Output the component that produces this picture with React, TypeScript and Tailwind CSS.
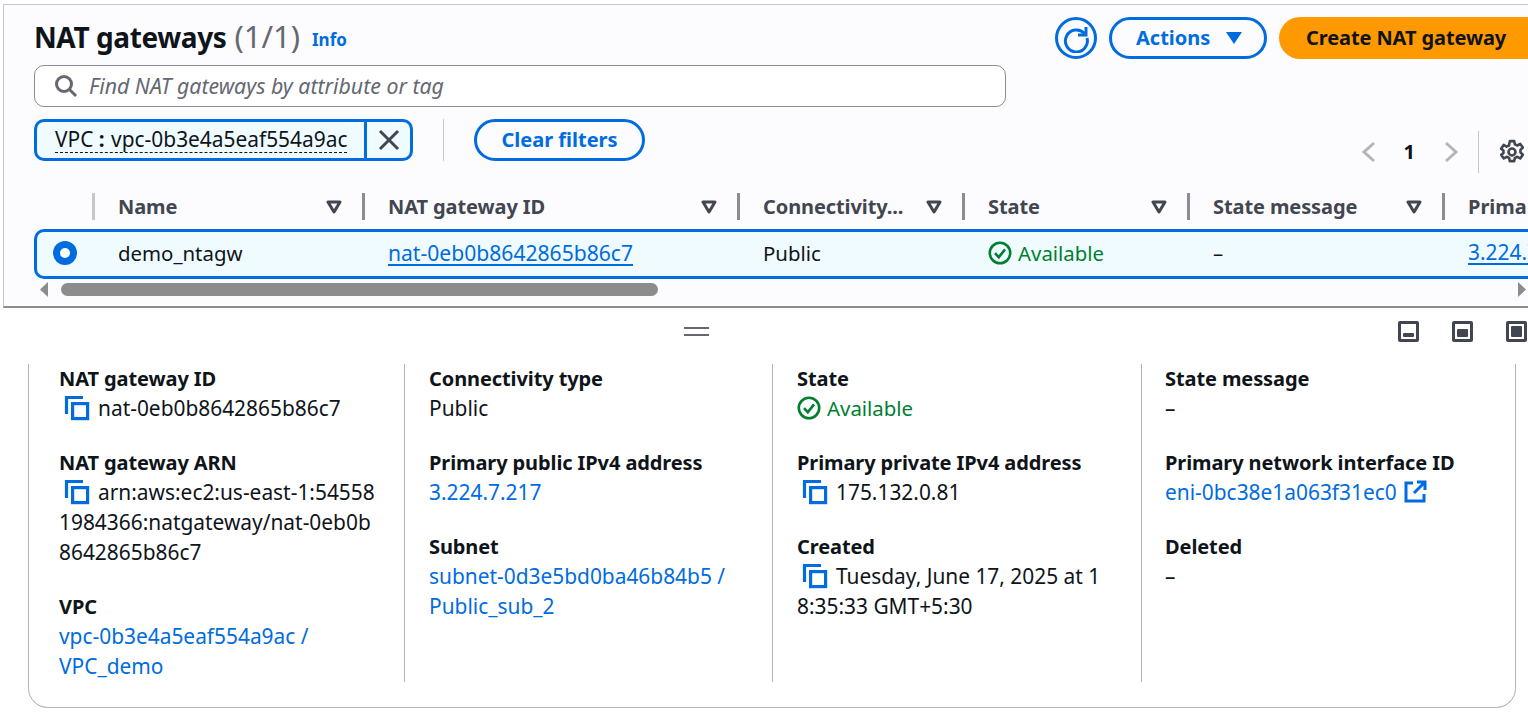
import React from "react";

const Copy = () => (
  <svg width="26" height="26" viewBox="0 0 26 26" fill="none" className="shrink-0" aria-hidden>
    <path d="M2.500 19V2.500H19" stroke="#006ce0" strokeWidth="3.200" />
    <rect x="8.600" y="8.600" width="15" height="15" stroke="#006ce0" strokeWidth="3.200" />
  </svg>
);

const Check = ({ size = 24 }: { size?: number }) => (
  <svg width={size} height={size} viewBox="0 0 24 24" fill="none" className="shrink-0" aria-hidden>
    <circle cx="12" cy="12" r="10.200" stroke="#00802f" strokeWidth="2.600" />
    <path d="M7 12.200l3.800 4L17 8.400" stroke="#00802f" strokeWidth="2.600" />
  </svg>
);

const SortDown = () => (
  <svg width="16" height="14" viewBox="0 0 16 14" fill="none" aria-hidden>
    <path d="M2 2h12L8 12z" stroke="#424650" strokeWidth="3" strokeLinejoin="round" />
  </svg>
);

const Column = ({
  name,
  width,
  strong,
}: {
  name: string;
  width: string;
  strong?: boolean;
}) => (
  <div className={`flex h-[27px] shrink-0 items-center border-l-[3px] pl-[23px] ${width} ${strong ? "border-[#8c8c94]" : "border-[#c6c6cd]"}`}>
    <span className="flex-1 whitespace-nowrap text-[20px] font-bold tracking-[-0.1px] text-[#424650]">{name}</span>
    <span className="mr-[20px] flex">
      <SortDown />
    </span>
  </div>
);

const Label = ({ children }: { children: React.ReactNode }) => (
  <div className="h-[30px] whitespace-nowrap text-[20px] font-bold leading-[30px] tracking-[-0.1px] text-[#0f141a]">{children}</div>
);

const Value = ({ children, blue }: { children: React.ReactNode; blue?: boolean }) => (
  <div className={`-translate-y-px whitespace-nowrap text-[20.9px] leading-[30px] ${blue ? "text-[#006ce0]" : "text-[#0f141a]"}`}>{children}</div>
);

const Field = ({ label, children }: { label: string; children: React.ReactNode }) => (
  <div className="mb-[24px]">
    <Label>{label}</Label>
    {children}
  </div>
);

const CopyLine = ({ children }: { children: React.ReactNode }) => (
  <span className="inline-flex items-center gap-[8px] pl-[5px] align-top">
    <Copy />
    <span>{children}</span>
  </span>
);

const DetailColumn = ({ children, width }: { children: React.ReactNode; width: string }) => (
  <div className={`h-[318px] shrink-0 first:border-l-0 first:pl-[30px] last:pl-[23px] border-l border-[#b4b4bb] pl-[24px] ${width}`}>
    {children}
  </div>
);

const Available = () => (
  <span className="flex -translate-x-px items-center gap-[6px] text-[20.4px] leading-[30px] text-[#00802f]">
    <Check />
    Available
  </span>
);

const SplitIcon = ({ fill }: { fill: string }) => (
  <span className="flex h-[21px] w-[21px] items-end rounded-[2px] border-[3px] border-[#424650] p-[2px]">
    <span className={`block w-full rounded-[1px] bg-[#424650] ${fill}`} />
  </span>
);

export default function App() {
  return (
    <div
      className="flex h-[712px] w-[1528px] flex-col overflow-hidden bg-white pt-[4px] pl-[3px]"
      style={{ fontFamily: '"Noto Sans", sans-serif' }}
    >
      <div className="flex h-[304px] shrink-0 flex-col border-t border-l border-b-2 border-[#c6c6cd] border-b-[#8c8c94] bg-[#fcfcfe]">
        <div className="flex h-[54px] shrink-0 items-end pl-[30px]">
          <div className="mb-[2px] flex h-[41px] flex-1 items-center">
            <h1 className="flex items-center whitespace-nowrap text-[28px] font-bold leading-none tracking-[-0.4px] text-[#0f141a]">
              NAT gateways
              <span className="ml-[8px] text-[31px] font-normal tracking-normal text-[#656871]">(1/1)</span>
            </h1>
            <span className="ml-[12px] mt-[6px] text-[17px] font-bold text-[#006ce0]">Info</span>
          </div>
          <div className="flex items-center">
            <button className="flex h-[42px] w-[42px] items-center justify-center rounded-full border-[3px] border-[#006ce0]">
              <svg width="30" height="30" viewBox="0 0 30 30" fill="none" aria-hidden>
                <path d="M23.500 10.500A11 11 0 1 0 26 15" stroke="#006ce0" strokeWidth="3" />
                <path d="M25 4v8h-8" stroke="#006ce0" strokeWidth="3" />
              </svg>
            </button>
            <button className="ml-[12px] flex h-[42px] w-[158px] items-center gap-[16px] rounded-full border-[3px] border-[#006ce0] pl-[24px] text-[20px] font-bold text-[#006ce0]">
              Actions
              <svg width="16" height="12" viewBox="0 0 16 12" aria-hidden>
                <path d="M0 0h16L8 12z" fill="#006ce0" />
              </svg>
            </button>
            <button className="ml-[12px] flex h-[42px] w-[249px] shrink-0 items-center rounded-l-full bg-[#ff9900] pl-[27px] text-[20px] font-bold tracking-[-0.1px] text-[#0f141a]">
              Create NAT gateway
            </button>
          </div>
        </div>

        <div className="mt-[6px] ml-[30px] flex h-[42px] w-[972px] shrink-0 items-center rounded-[10px] border border-[#8c8c94] bg-white pl-[19px]">
          <svg width="24" height="24" viewBox="0 0 24 24" fill="none" aria-hidden>
            <circle cx="10" cy="10" r="7.500" stroke="#656871" strokeWidth="3" />
            <path d="M15.500 15.500l6.500 6.500" stroke="#656871" strokeWidth="3" />
          </svg>
          <span className="ml-[11px] text-[21.3px] italic text-[#656871]">Find NAT gateways by attribute or tag</span>
        </div>

        <div className="mt-[12px] flex h-[53px] shrink-0 pl-[30px]">
          <div className="flex h-[42px] w-[379px] rounded-[10px] border-[3px] border-[#006ce0] bg-[#f0fbff]">
            <span className="flex flex-1 items-center pl-[18px]">
              <span className="border-b border-dashed border-[#0f141a] text-[20.9px] leading-[25px] whitespace-nowrap text-[#0f141a]">
                VPC <b className="mr-[1px]">:</b> vpc-0b3e4a5eaf554a9ac
              </span>
            </span>
            <span className="flex w-[46px] items-center justify-center border-l-[3px] border-[#006ce0]">
              <svg width="22" height="22" viewBox="0 0 22 22" fill="none" aria-hidden>
                <path d="M2 2l18 18M20 2L2 20" stroke="#424650" strokeWidth="3" />
              </svg>
            </span>
          </div>
          <div className="ml-[30px] h-[42px] w-px bg-[#c6c6cd]" />
          <button className="ml-[30px] flex h-[42px] w-[171px] items-center justify-center rounded-full border-[3px] border-[#006ce0] text-[20px] font-bold text-[#006ce0]">
            Clear filters
          </button>
          <div className="ml-auto mt-[12px] flex h-[42px] items-center">
            <svg width="16" height="22" viewBox="0 0 16 22" fill="none" aria-hidden>
              <path d="M13 2L3 11l10 9" stroke="#b4b4bb" strokeWidth="3" />
            </svg>
            <span className="ml-[27px] text-[20px] font-bold text-[#0f141a]">1</span>
            <svg width="16" height="22" viewBox="0 0 16 22" fill="none" className="ml-[28px]" aria-hidden>
              <path d="M3 2l10 9-10 9" stroke="#b4b4bb" strokeWidth="3" />
            </svg>
            <span className="ml-[19px] h-[42px] w-px bg-[#c6c6cd]" />
            <svg width="26" height="26" viewBox="0 0 24 24" fill="none" className="ml-[20px] mr-[3px]" aria-hidden>
              <path
                d="M10 2h4l.7 3 2.200 1 2.700-1.500 2.400 3.400-2.200 2.100v2.400l2.200 2.100-2.400 3.400-2.700-1.500-2.200 1-.7 3h-4l-.7-3-2.200-1-2.700 1.500-2.400-3.400L4.100 13v-2.400L1.900 8.900l2.400-3.400L7 7l2.200-1z"
                stroke="#424650"
                strokeWidth="2.400"
                strokeLinejoin="round"
              />
              <circle cx="12" cy="12" r="3.200" stroke="#424650" strokeWidth="2.400" />
            </svg>
          </div>
        </div>

        <div className="mt-[21px] flex h-[27px] shrink-0 overflow-hidden pl-[88px]">
          <Column name="Name" width="w-[270px]" />
          <Column name="NAT gateway ID" width="w-[375px]" strong />
          <Column name="Connectivity..." width="w-[225px]" strong />
          <Column name="State" width="w-[225px]" strong />
          <Column name="State message" width="w-[255px]" strong />
          <div className="flex h-[27px] shrink-0 items-center border-l-[3px] border-[#8c8c94] pl-[23px] text-[20px] font-bold text-[#424650]">
            Prima
          </div>
        </div>

        <div className="mt-[9px] ml-[30px] flex h-[50px] shrink-0 items-center overflow-hidden rounded-l-[10px] border-y-[3px] border-l-[3px] border-[#006ce0] bg-[#f0fbff] pb-[2px] text-[20.4px] text-[#0f141a]">
          <span className="ml-[16px] flex h-[24px] w-[24px] shrink-0 items-center justify-center rounded-full bg-[#006ce0]">
            <span className="h-[10px] w-[10px] rounded-full bg-white" />
          </span>
          <span className="ml-[41px] w-[270px] shrink-0">demo_ntagw</span>
          <span className="w-[375px] shrink-0 text-[21.1px] text-[#006ce0] underline underline-offset-[3px]">nat-0eb0b8642865b86c7</span>
          <span className="w-[225px] shrink-0">Public</span>
          <span className="w-[225px] shrink-0 translate-x-px">
            <Available />
          </span>
          <span className="w-[255px] shrink-0">–</span>
          <span className="w-[60px] shrink-0 overflow-hidden whitespace-nowrap text-[20.9px] text-[#006ce0] underline underline-offset-[3px]">3.224.7.217</span>
        </div>

        <div className="mt-[4px] flex h-[13px] shrink-0 items-center pl-[36px]">
          <svg width="8" height="15" viewBox="0 0 8 15" aria-hidden>
            <path d="M8 0v15L0 7.500z" fill="#8c8c8c" />
          </svg>
          <span className="ml-[13px] h-[13px] w-[597px] rounded-full bg-[#8c8c8c]" />
          <svg width="8" height="15" viewBox="0 0 8 15" className="ml-auto mr-[2px]" aria-hidden>
            <path d="M0 0v15l8-7.500z" fill="#8c8c8c" />
          </svg>
        </div>
      </div>

      <div className="flex h-[56px] shrink-0 items-start">
        <div className="ml-[681px] mt-[19px] flex w-[25px] flex-col gap-[5px]">
          <span className="h-[2px] bg-[#656871]" />
          <span className="h-[2px] bg-[#656871]" />
        </div>
        <div className="ml-auto mt-[13px] flex gap-[33px] pr-[1px]">
          <SplitIcon fill="h-[4px]" />
          <SplitIcon fill="h-[8px]" />
          <SplitIcon fill="h-[11px]" />
        </div>
      </div>

      <div className="ml-[25px] flex h-[344px] w-[1488px] shrink-0 rounded-b-[20px] border-x border-b border-[#b4b4bb] bg-white">
        <DetailColumn width="w-[375px]">
          <Field label="NAT gateway ID">
            <Value><CopyLine>nat-0eb0b8642865b86c7</CopyLine></Value>
          </Field>
          <Field label="NAT gateway ARN">
            <Value>
              <CopyLine>arn:aws:ec2:us-east-1:54558</CopyLine>
              <br />1984366:natgateway/nat-0eb0b
              <br />8642865b86c7
            </Value>
          </Field>
          <Field label="VPC">
            <Value blue>vpc-0b3e4a5eaf554a9ac /<br />VPC_demo</Value>
          </Field>
        </DetailColumn>
        <DetailColumn width="w-[368px]">
          <Field label="Connectivity type"><Value>Public</Value></Field>
          <Field label="Primary public IPv4 address"><Value blue>3.224.7.217</Value></Field>
          <Field label="Subnet">
            <Value blue>subnet-0d3e5bd0ba46b84b5 /<br />Public_sub_2</Value>
          </Field>
        </DetailColumn>
        <DetailColumn width="w-[369px]">
          <Field label="State"><div className="-translate-y-px translate-x-px"><Available /></div></Field>
          <Field label="Primary private IPv4 address">
            <Value><CopyLine>175.132.0.81</CopyLine></Value>
          </Field>
          <Field label="Created">
            <Value>
              <CopyLine>Tuesday, June 17, 2025 at 1</CopyLine>
              <br />8:35:33 GMT+5:30
            </Value>
          </Field>
        </DetailColumn>
        <DetailColumn width="w-[370px]">
          <Field label="State message"><Value>–</Value></Field>
          <Field label="Primary network interface ID">
            <Value blue>
              <span className="inline-flex items-center gap-[6px]">
                eni-0bc38e1a063f31ec0
                <svg width="24" height="24" viewBox="0 0 24 24" fill="none" aria-hidden>
                  <path d="M10 3H3v18h18v-7" stroke="#006ce0" strokeWidth="3" />
                  <path d="M14 2h8v8M22 2L11 13" stroke="#006ce0" strokeWidth="3" />
                </svg>
              </span>
            </Value>
          </Field>
          <Field label="Deleted"><Value>–</Value></Field>
        </DetailColumn>
      </div>
    </div>
  );
}
